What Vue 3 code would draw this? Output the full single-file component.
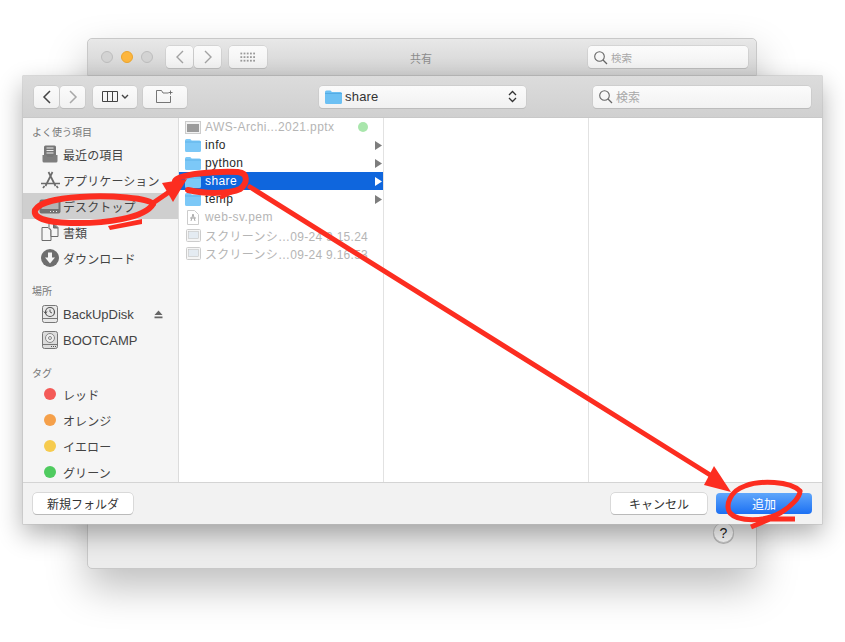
<script setup>
const favorites = [
  { label: '最近の項目', icon: 'recent' },
  { label: 'アプリケーション', icon: 'apps' },
  { label: 'デスクトップ', icon: 'desktop', active: true },
  { label: '書類', icon: 'docs' },
  { label: 'ダウンロード', icon: 'download' },
]
const tags = [
  { label: 'レッド', color: '#f45a57' },
  { label: 'オレンジ', color: '#f5a04a' },
  { label: 'イエロー', color: '#f6cb4e' },
  { label: 'グリーン', color: '#4fcb5f' },
]
const files = [
  { name: 'AWS-Archi...2021.pptx', type: 'ppt', dim: true, dot: true },
  { name: 'info', type: 'folder', arrow: true },
  { name: 'python', type: 'folder', arrow: true },
  { name: 'share', type: 'folder', arrow: true, selected: true },
  { name: 'temp', type: 'folder', arrow: true },
  { name: 'web-sv.pem', type: 'pem', dim: true },
  { name: 'スクリーンシ…09-24 9.15.24', type: 'shot', dim: true },
  { name: 'スクリーンシ…09-24 9.16.53', type: 'shot', dim: true },
]
</script>

<template>
  <div class="desktop">
    <section class="window back">
      <header class="back-bar">
        <div class="lights">
          <i class="light"></i><i class="light amber"></i><i class="light"></i>
        </div>
        <div class="btn-group">
          <button class="tb nav-small"><svg width="12" height="16" viewBox="0 0 12 16"><path d="M9 2 3 8l6 6" fill="none" stroke="#a2a2a2" stroke-width="1.4"/></svg></button>
          <button class="tb nav-small"><svg width="12" height="16" viewBox="0 0 12 16"><path d="M3 2l6 6-6 6" fill="none" stroke="#a2a2a2" stroke-width="1.4"/></svg></button>
        </div>
        <button class="tb grid-btn">
          <svg width="16" height="11" viewBox="0 0 16 11" fill="#9a9a9a"><rect v-for="n in 15" :key="n" :x="(n - 1) % 5 * 3.2 + .4" :y="Math.floor((n - 1) / 5) * 3.6 + .6" width="1.8" height="1.8"/></svg>
        </button>
        <span class="back-title">共有</span>
        <div class="search back-search">
          <svg width="15" height="15" viewBox="0 0 15 15"><circle cx="6.5" cy="6.5" r="4.8" fill="none" stroke="#666" stroke-width="1.1"/><path d="m10 10 4 4" stroke="#666" stroke-width="1.3"/></svg>
          <span>検索</span>
        </div>
      </header>
      <button class="help">?</button>
    </section>

    <section class="window dialog">
      <header class="toolbar">
        <div class="btn-group">
          <button class="tb nav"><svg width="12" height="16" viewBox="0 0 12 16"><path d="M9 2 3 8l6 6" fill="none" stroke="#444" stroke-width="1.5"/></svg></button>
          <button class="tb nav"><svg width="12" height="16" viewBox="0 0 12 16"><path d="M3 2l6 6-6 6" fill="none" stroke="#a8a8a8" stroke-width="1.5"/></svg></button>
        </div>
        <button class="tb view-btn">
          <svg width="16" height="11" viewBox="0 0 16 11"><path d="M.5.5h15v10H.5zM5.5.5v10M10.5.5v10" fill="none" stroke="#444"/></svg>
          <svg width="8" height="6" viewBox="0 0 8 6"><path d="m1 1 3 3 3-3" fill="none" stroke="#444" stroke-width="1.4"/></svg>
        </button>
        <button class="tb new-btn">
          <svg width="18" height="13" viewBox="0 0 18 13"><path d="M12.500 3H7L5.500.5h-5v12h14V6M14.500.5v4M12.500 2.500h4" fill="none" stroke="#666" stroke-width=".9"/></svg>
        </button>
        <div class="tb path-select">
          <svg class="folder" width="17" height="14" viewBox="0 0 17 14"><path d="M0 2q0-1.500 1.500-1.500h4L7 2h8.500Q17 2 17 3.500v9q0 1.500-1.500 1.500h-14Q0 14 0 12.500z" fill="#6cc0f3"/><path d="M0 3.500h17" stroke="#4ba4dd" stroke-width=".7"/></svg>
          <span class="path-name">share</span>
          <svg class="updown" width="9" height="13" viewBox="0 0 9 13"><path d="m1 5 3.500-3.500L8 5M1 8l3.500 3.500L8 8" fill="none" stroke="#333" stroke-width="1.3"/></svg>
        </div>
        <div class="search front-search">
          <svg width="15" height="15" viewBox="0 0 15 15"><circle cx="6.500" cy="6.500" r="4.800" fill="none" stroke="#666" stroke-width="1.100"/><path d="m10 10 4 4" stroke="#666" stroke-width="1.300"/></svg>
          <span>検索</span>
        </div>
      </header>

      <div class="body">
        <aside class="sidebar">
          <h4 class="first">よく使う項目</h4>
          <div v-for="f in favorites" :key="f.label" class="side-item" :class="{ active: f.active }">
            <span class="side-icon">
              <svg v-if="f.icon === 'recent'" width="16" height="18" viewBox="0 0 16 18"><rect x="2" y=".5" width="12" height="12" rx="1.500" fill="#777"/><path d="M4.500 3h7M4.500 5.500h7M4.500 8h7" stroke="#eee" stroke-width="1"/><path d="M.5 10h4l1 2h5l1-2h4v6q0 1.500-1.500 1.500H2q-1.500 0-1.500-1.500z" fill="#7e7e7e"/></svg>
              <svg v-else-if="f.icon === 'apps'" width="21" height="18" viewBox="0 0 21 18"><path d="M8.500 1l7 14M12.500 1l-7 14M1 12.500h19M4.500 15l-1.500 2M16.500 15l1.500 2" fill="none" stroke="#6b6b6b" stroke-width="1.700"/></svg>
              <svg v-else-if="f.icon === 'desktop'" width="22" height="15" viewBox="0 0 22 15"><rect x=".5" y=".5" width="21" height="14" rx="2" fill="#727272"/><path d="M2.500 2.500h17V10h-17z" fill="#b4b4b4"/><path d="M11 12.500h1M14 12.500h1M17 12.500h1" stroke="#eee"/></svg>
              <svg v-else-if="f.icon === 'docs'" width="18" height="18" viewBox="0 0 18 18"><path d="M1 4.500h6l3 3v10H1z" fill="#f6f6f6" stroke="#6b6b6b"/><path d="M8 .5h5l4 4v9h-7V7L8 4.500z" fill="#f6f6f6" stroke="#6b6b6b"/><path d="M12.500.5v4.500H17" fill="#777" stroke="#6b6b6b"/></svg>
              <svg v-else width="18" height="18" viewBox="0 0 18 18"><circle cx="9" cy="9" r="9" fill="#6e6e6e"/><path d="M7 3.500h4v5h3l-5 6-5-6h3z" fill="#f4f4f4"/></svg>
            </span>
            <span>{{ f.label }}</span>
          </div>

          <h4>場所</h4>
          <div class="side-item latin">
            <span class="side-icon">
              <svg width="16" height="18" viewBox="0 0 16 18"><rect x=".5" y=".5" width="15" height="17" rx="2" fill="#e8e8e8" stroke="#777"/><path d="M.5 13.500h15" stroke="#777"/><circle cx="8" cy="7" r="4.500" fill="none" stroke="#555" stroke-width="1.200"/><path d="M8 4.500V7l2 1M1.800 6.500 3.500 8.500 5 6.500" fill="none" stroke="#555"/></svg>
            </span>
            <span>BackUpDisk</span>
            <svg class="eject" width="9" height="9" viewBox="0 0 9 9" fill="#666"><path d="M4.500.5 8.500 5H.5zM.5 6.500h8V8.300h-8z"/></svg>
          </div>
          <div class="side-item latin">
            <span class="side-icon">
              <svg width="16" height="18" viewBox="0 0 16 18"><rect x=".5" y=".5" width="15" height="17" rx="2" fill="#dcdcdc" stroke="#777"/><path d="M.5 13.500h15" stroke="#777"/><circle cx="8" cy="7" r="4.500" fill="#eee" stroke="#888"/><circle cx="8" cy="7" r="1.500" fill="none" stroke="#888"/><path d="M9 15.500h1M11 15.500h1M13 15.500h1" stroke="#555"/></svg>
            </span>
            <span>BOOTCAMP</span>
          </div>

          <h4 class="tags-head">タグ</h4>
          <div v-for="t in tags" :key="t.label" class="side-item">
            <span class="side-icon"><i class="tag" :style="{ background: t.color }"></i></span>
            <span>{{ t.label }}</span>
          </div>
        </aside>

        <div class="col col-a">
          <div v-for="f in files" :key="f.name" class="row" :class="[f.type, { dim: f.dim, selected: f.selected }]">
            <span class="row-icon">
              <svg v-if="f.type === 'folder'" width="16" height="13" viewBox="0 0 16 13"><path d="M0 1.500Q0 0 1.500 0h3.700L6.700 1.500h7.800Q16 1.500 16 3v8.500Q16 13 14.500 13h-13Q0 13 0 11.500z" fill="#7cc8f7"/><path d="M0 3h16" stroke="#58aee3" stroke-width=".7"/></svg>
              <svg v-else-if="f.type === 'ppt'" width="16" height="13" viewBox="0 0 16 13"><rect x=".5" y=".5" width="15" height="12" fill="#f2f2f2" stroke="#ccc"/><rect x="2" y="3" width="12" height="8" fill="#9b9b9b"/></svg>
              <svg v-else-if="f.type === 'pem'" width="12" height="15" viewBox="0 0 12 15"><path d="M.5.500h7l4 4v10H.5z" fill="#fff" stroke="#ccc"/><path d="M6 4 4 11M6 4l2 7M3 8h6" stroke="#aaa" fill="none"/></svg>
              <svg v-else width="15" height="13" viewBox="0 0 15 13"><rect x=".5" y=".5" width="14" height="12" rx="1" fill="#f5f5f5" stroke="#ccc"/><rect x="2.500" y="2.500" width="10" height="7" fill="#e4ebf2" stroke="#bbb" stroke-width=".5"/></svg>
            </span>
            <span class="row-name">{{ f.name }}</span>
            <i v-if="f.dot" class="row-dot"></i>
            <svg v-if="f.arrow" class="row-arrow" width="7" height="9" viewBox="0 0 7 9"><path d="M0 0l7 4.500L0 9z"/></svg>
          </div>
        </div>
        <div class="col col-b"></div>
        <div class="col col-c"></div>
      </div>

      <footer class="footer">
        <button class="push">新規フォルダ</button>
        <span class="spacer"></span>
        <button class="push cancel">キャンセル</button>
        <button class="push primary">追加</button>
      </footer>
    </section>

    <svg class="ink" width="845" height="642" viewBox="0 0 845 642" aria-hidden="true">
      <g fill="none" stroke="#fc2d20" stroke-linecap="round" stroke-linejoin="round">
        <path stroke-width="6" d="M153 204C150 198 110 195 80 197C60 198 40 202 35 210C33 218 45 222 70 223C105 224 145 218 153 204"/>
        <path stroke-width="5" d="M153 203 172 190"/>
        <path stroke-width="6" d="M175 181C178 174 215 171 238 172C248 173 248 183 240 189C230 194 205 194 188 190"/>
        <path stroke-width="4" d="M222 197 236 190"/>
        <path stroke-width="5" d="M250 187 715 478"/>
        <path stroke-width="5" d="M800 491C790 481 760 480 745 486C730 491 725 505 730 513C738 522 765 522 780 513C790 507 800 498 800 491"/>
        <path stroke-width="5" stroke-linecap="butt" d="M751 527 770 519H795"/>
      </g>
      <path d="M108 226 142 219 142 224 110 230z" fill="#fc2d20"/>
      <path d="M162 183 187 179 173 202z" fill="#fc2d20"/>
      <path d="M714 466 731 492 704 485z" fill="#fc2d20"/>
    </svg>
  </div>
</template>

<style scoped>
.desktop {
  position: relative;
  width: 845px;
  height: 642px;
  overflow: hidden;
  background: #fff;
  font-family: "Liberation Sans", "Noto Sans CJK JP", sans-serif;
  color: #333;
}
button { font-family: inherit; padding: 0; margin: 0; }
.window { position: absolute; box-sizing: border-box; }
.back {
  left: 87px;
  top: 38px;
  width: 670px;
  height: 531px;
  background: #ececec;
  border: 1px solid #c8c8c8;
  border-radius: 5px;
  box-shadow: 0 18px 40px rgba(0, 0, 0, .26);
}
.back-bar {
  display: flex;
  align-items: center;
  height: 37px;
  padding: 0 8px 0 13px;
  box-sizing: border-box;
  background: linear-gradient(#e8e8e8, #d2d2d2);
  border-bottom: 1px solid #b5b5b5;
  border-radius: 5px 5px 0 0;
}
.lights { display: flex; gap: 8px; margin-right: 13px; }
.light {
  width: 12px;
  height: 12px;
  border-radius: 50%;
  box-sizing: border-box;
  background: #d3d3d3;
  border: 1px solid #bdbdbd;
}
.light.amber { background: #fdb63e; border-color: #eaa52f; }
.btn-group { display: flex; gap: 1px; }
.tb {
  display: flex;
  align-items: center;
  justify-content: center;
  box-sizing: border-box;
  height: 22px;
  background: linear-gradient(#fbfbfb, #f1f1f1);
  border: 0;
  border-radius: 4px;
  box-shadow: 0 0 0 .5px #c4c4c4, 0 1px 0 #b5b5b5;
}
.nav-small { width: 27px; }
.grid-btn { width: 38px; margin-left: 8px; }
.back-title {
  position: absolute;
  left: 322px;
  top: 11px;
  font-size: 11px;
  color: #8c8c8c;
}
.search {
  display: flex;
  align-items: center;
  gap: 3px;
  box-sizing: border-box;
  height: 22px;
  padding: 0 5px;
  background: linear-gradient(#fbfbfb, #f2f2f2);
  border-radius: 4px;
  box-shadow: 0 0 0 .5px #c4c4c4, 0 1px 0 #b5b5b5;
  color: #a8a8a8;
}
.back-search { margin-left: auto; width: 160px; font-size: 10.5px; }
.help {
  position: absolute;
  left: 625px;
  top: 483px;
  width: 21px;
  height: 21px;
  border-radius: 50%;
  border: 1px solid #c4c4c4;
  background: #fcfcfc;
  color: #222;
  font-size: 14px;
  line-height: 18px;
  box-shadow: 0 1px 0 #b5b5b5;
}
.dialog {
  left: 23px;
  top: 76px;
  width: 799px;
  height: 448px;
  display: flex;
  flex-direction: column;
  background: #fff;
  box-shadow: 0 0 0 .5px #bcbcbc, 0 10px 24px rgba(0, 0, 0, .32);
}
.toolbar {
  display: flex;
  align-items: center;
  height: 42px;
  flex: none;
  padding: 0 11px;
  box-sizing: border-box;
  background: linear-gradient(#dcdcdc, #d0d0d0);
  border-bottom: 1px solid #c8c8c8;
}
.nav { width: 25px; }
.view-btn { width: 44px; gap: 3px; margin-left: 8px; }
.new-btn { width: 44px; margin-left: 6px; }
.path-select {
  justify-content: flex-start;
  width: 207px;
  margin-left: 132px;
  padding: 0 9px 0 6px;
  font-size: 13px;
  color: #333;
}
.path-name { margin-left: 3px; letter-spacing: .2px; }
.updown { margin-left: auto; }
.front-search {
  width: 218px;
  margin-left: 67px;
  font-size: 12px;
}
.body { display: flex; flex: 1; min-height: 0; }
.sidebar {
  width: 156px;
  flex: none;
  box-sizing: border-box;
  background: #f5f5f5;
  border-right: 1px solid #dcdcdc;
  overflow: hidden;
  font-size: 12px;
}
.sidebar h4 {
  margin: 14px 0 3px 9px;
  height: 13px;
  font-size: 10px;
  line-height: 13px;
  font-weight: 400;
  color: #777;
}
.sidebar h4.first { margin-top: 8px; margin-bottom: 2px; }
.sidebar h4.tags-head { margin-bottom: 1px; }
.side-item {
  display: flex;
  align-items: center;
  height: 26px;
  color: #444;
  letter-spacing: .1px;
}
.side-item.latin { font-size: 13px; letter-spacing: 0; }
.side-item.active { background: #cfcfcf; }
.side-icon {
  display: flex;
  align-items: center;
  justify-content: center;
  flex: none;
  width: 40px;
  padding-left: 14px;
  box-sizing: border-box;
}
.tag {
  width: 12px;
  height: 12px;
  border-radius: 50%;
}
.eject { margin-left: auto; margin-right: 15px; }
.col {
  box-sizing: border-box;
  height: 100%;
  border-right: 1px solid #e2e2e2;
}
.col-a { width: 205px; font-size: 12px; letter-spacing: .4px; }
.col-b { width: 205px; }
.col-c { flex: 1; border-right: 0; }
.row {
  display: flex;
  align-items: center;
  height: 18px;
  padding-left: 6px;
  color: #2a2a2a;
}
.row.dim { color: #b5b5b5; }
.row.shot { letter-spacing: .28px; }
.row.selected { background: #0f66dd; color: #fff; }
.row-icon {
  display: flex;
  justify-content: center;
  width: 16px;
  flex: none;
  margin-right: 4px;
}
.row-name { white-space: nowrap; }
.row-dot {
  width: 10px;
  height: 10px;
  border-radius: 50%;
  margin-left: auto;
  margin-right: 15px;
  background: #a9e6ac;
}
.row-arrow { margin-left: auto; margin-right: 1px; fill: #7d7d7d; }
.row.selected .row-arrow { fill: #fff; }
.footer {
  display: flex;
  align-items: center;
  height: 42px;
  flex: none;
  padding: 0 10px;
  box-sizing: border-box;
  background: #f2f2f2;
  border-top: 1px solid #d4d4d4;
}
.spacer { flex: 1; }
.push {
  height: 21px;
  width: 100px;
  box-sizing: border-box;
  border: 0;
  border-radius: 4px;
  padding-bottom: 1px;
  background: #fff;
  box-shadow: 0 0 0 .5px #c0c0c0, 0 1px 0 #b5b5b5;
  font-size: 12px;
  color: #333;
}
.cancel { width: 96px; margin-right: 9px; }
.primary {
  width: 96px;
  color: #fff;
  background: linear-gradient(#5fa6fb, #1c70f3);
  box-shadow: none;
}
.ink { position: absolute; left: 0; top: 0; pointer-events: none; }
</style>
